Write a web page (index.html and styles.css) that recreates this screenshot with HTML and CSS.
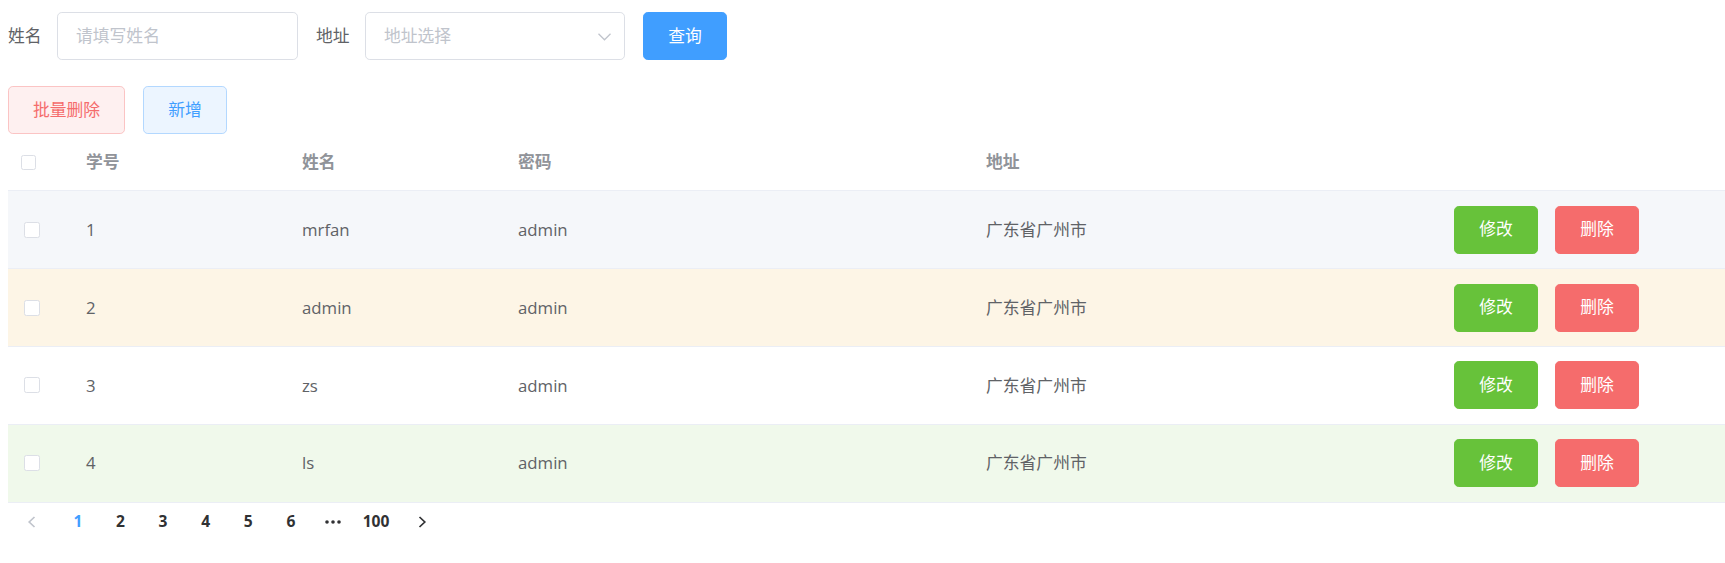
FILE: index.html
```html
<!DOCTYPE html>
<html lang="zh-CN">
<head>
<meta charset="utf-8">
<title>学生管理</title>
<link rel="stylesheet" href="styles.css">
</head>
<body>
<div class="page">
  <form class="search-form">
    <div class="form-item">
      <label class="form-label">姓名</label>
      <div class="input name-input"><span class="placeholder">请填写姓名</span></div>
    </div>
    <div class="form-item">
      <label class="form-label">地址</label>
      <div class="input select-input">
        <span class="placeholder">地址选择</span>
        <svg class="select-arrow" width="13" height="8" viewBox="0 0 13 8"><polyline points="0.5,0.8 6.5,6.8 12.5,0.8" fill="none" stroke="#c0c4cc" stroke-width="1.3"/></svg>
      </div>
    </div>
    <div class="form-item">
      <button type="button" class="btn btn-primary">查询</button>
    </div>
  </form>

  <div class="toolbar">
    <button type="button" class="btn btn-danger-plain">批量删除</button>
    <button type="button" class="btn btn-primary-plain">新增</button>
  </div>

  <table class="data-table">
    <colgroup>
      <col class="col-check">
      <col class="col-id">
      <col class="col-name">
      <col>
      <col>
      <col class="col-ops">
    </colgroup>
    <thead>
      <tr>
        <th class="check-cell head-check"><span class="checkbox small"></span></th>
        <th><div class="cell">学号</div></th>
        <th><div class="cell">姓名</div></th>
        <th><div class="cell">密码</div></th>
        <th><div class="cell">地址</div></th>
        <th><div class="cell"></div></th>
      </tr>
    </thead>
    <tbody>
      <tr class="row-hover">
        <td class="check-cell"><span class="checkbox"></span></td>
        <td><div class="cell">1</div></td>
        <td><div class="cell">mrfan</div></td>
        <td><div class="cell">admin</div></td>
        <td><div class="cell">广东省广州市</div></td>
        <td><div class="cell ops"><button type="button" class="btn btn-success">修改</button><button type="button" class="btn btn-danger">删除</button></div></td>
      </tr>
      <tr class="row-warning">
        <td class="check-cell"><span class="checkbox"></span></td>
        <td><div class="cell">2</div></td>
        <td><div class="cell">admin</div></td>
        <td><div class="cell">admin</div></td>
        <td><div class="cell">广东省广州市</div></td>
        <td><div class="cell ops"><button type="button" class="btn btn-success">修改</button><button type="button" class="btn btn-danger">删除</button></div></td>
      </tr>
      <tr>
        <td class="check-cell"><span class="checkbox"></span></td>
        <td><div class="cell">3</div></td>
        <td><div class="cell">zs</div></td>
        <td><div class="cell">admin</div></td>
        <td><div class="cell">广东省广州市</div></td>
        <td><div class="cell ops"><button type="button" class="btn btn-success">修改</button><button type="button" class="btn btn-danger">删除</button></div></td>
      </tr>
      <tr class="row-success">
        <td class="check-cell"><span class="checkbox"></span></td>
        <td><div class="cell">4</div></td>
        <td><div class="cell">ls</div></td>
        <td><div class="cell">admin</div></td>
        <td><div class="cell">广东省广州市</div></td>
        <td><div class="cell ops"><button type="button" class="btn btn-success">修改</button><button type="button" class="btn btn-danger">删除</button></div></td>
      </tr>
    </tbody>
  </table>

  <div class="pagination">
    <button type="button" class="pg-btn pg-prev" disabled>
      <svg width="9" height="12" viewBox="0 0 9 12"><polyline points="7.5,1 2.2,6 7.5,11" fill="none" stroke="#c0c4cc" stroke-width="1.7"/></svg>
    </button>
    <ul class="pager">
      <li class="active">1</li>
      <li>2</li>
      <li>3</li>
      <li>4</li>
      <li>5</li>
      <li>6</li>
      <li class="more"><svg width="16" height="4" viewBox="0 0 16 4"><circle cx="2" cy="2" r="1.8" fill="#303133"/><circle cx="8" cy="2" r="1.8" fill="#303133"/><circle cx="14" cy="2" r="1.8" fill="#303133"/></svg></li>
      <li>100</li>
    </ul>
    <button type="button" class="pg-btn pg-next">
      <svg width="9" height="12" viewBox="0 0 9 12"><polyline points="1.5,1 6.8,6 1.5,11" fill="none" stroke="#303133" stroke-width="1.7"/></svg>
    </button>
  </div>
</div>
</body>
</html>
```

FILE: styles.css
```css
* {
  box-sizing: border-box;
}

html, body {
  margin: 0;
  padding: 0;
  background: #ffffff;
}

body {
  font-family: "Open Sans", "Noto Sans CJK SC", sans-serif;
  font-size: 16.8px;
  color: #606266;
}

.page {
  padding: 12px 0 0 8px;
}

/* search form */
.search-form {
  display: flex;
  align-items: center;
  gap: 18px;
  margin: 0 0 26px 0;
}

.form-item {
  display: flex;
  align-items: center;
  height: 48px;
}

.form-label {
  color: #606266;
  font-size: 16.8px;
  line-height: 48px;
  width: 49px;
  flex-shrink: 0;
}

.input {
  position: relative;
  height: 48px;
  border: 1px solid #dcdfe6;
  border-radius: 4.8px;
  background: #fff;
  padding: 0 18px;
  display: flex;
  align-items: center;
}

.name-input {
  width: 241px;
}

.select-input {
  width: 260px;
}

.placeholder {
  color: #c0c4cc;
  font-size: 16.8px;
  line-height: 1;
}

.select-arrow {
  position: absolute;
  right: 13px;
  top: 20px;
}

/* buttons */
.btn {
  display: inline-flex;
  align-items: center;
  justify-content: center;
  flex-shrink: 0;
  height: 48px;
  padding: 0;
  width: 84px;
  white-space: nowrap;
  border: 1px solid #dcdfe6;
  border-radius: 4.8px;
  font-family: "Open Sans", "Noto Sans CJK SC", sans-serif;
  font-size: 16.8px;
  line-height: 1;
  cursor: pointer;
  background: #fff;
  color: #606266;
}

.btn-primary {
  background: #409eff;
  border-color: #409eff;
  color: #fff;
}

.btn-success {
  background: #67c23a;
  border-color: #67c23a;
  color: #fff;
}

.btn-danger {
  background: #f56c6c;
  border-color: #f56c6c;
  color: #fff;
}

.btn-danger-plain {
  background: #fef0f0;
  border-color: #fbc4c4;
  color: #f56c6c;
  width: 117px;
}

.btn-primary-plain {
  background: #ecf5ff;
  border-color: #b3d8ff;
  color: #409eff;
}

.toolbar {
  display: flex;
  gap: 18px;
  height: 48px;
}

/* table */
.data-table {
  width: 100%;
  table-layout: fixed;
  border-collapse: collapse;
  border-spacing: 0;
}

.col-check { width: 66px; }
.col-id { width: 216px; }
.col-name { width: 216px; }
.col-ops { width: 283px; }

.data-table th,
.data-table td {
  padding: 14.4px 0;
  text-align: left;
  border-bottom: 1px solid #ebeef5;
  vertical-align: middle;
}

.data-table th {
  color: #909399;
  font-weight: 700;
  font-size: 16.8px;
}

.cell {
  padding: 0 12px;
  line-height: 27.6px;
  white-space: nowrap;
}

.check-cell {
  padding-left: 16px !important;
}

.data-table th.head-check {
  padding-left: 13px !important;
}

.checkbox {
  display: block;
  width: 16px;
  height: 16px;
  border: 1px solid #dcdfe6;
  border-radius: 2.4px;
  background: #fff;
}

.checkbox.small {
  width: 15px;
  height: 15px;
}

.ops {
  display: flex;
  gap: 17px;
}

.row-hover td { background: #f5f7fa; }
.row-warning td { background: #fdf5e6; }
.row-success td { background: #f0f9eb; }

/* pagination */
.pagination {
  display: flex;
  align-items: center;
  padding: 2.4px 6px;
  color: #303133;
}

.pg-btn {
  width: 42.6px;
  height: 33.6px;
  border: 0;
  background: transparent;
  display: flex;
  align-items: center;
  justify-content: center;
  cursor: pointer;
}

.pg-prev {
  padding: 0 14.4px 0 7.2px;
}

.pg-next {
  padding: 0 7.2px 0 14.4px;
}

.pager {
  display: flex;
  list-style: none;
  margin: 0;
  padding: 0;
}

.pager li {
  min-width: 42.6px;
  height: 33.6px;
  line-height: 33.6px;
  text-align: center;
  font-size: 15.6px;
  font-weight: 700;
  color: #303133;
  padding: 0 4.8px;
}

.pager li.active {
  color: #409eff;
}

.pager li.more {
  display: flex;
  align-items: center;
  justify-content: center;
}
```
